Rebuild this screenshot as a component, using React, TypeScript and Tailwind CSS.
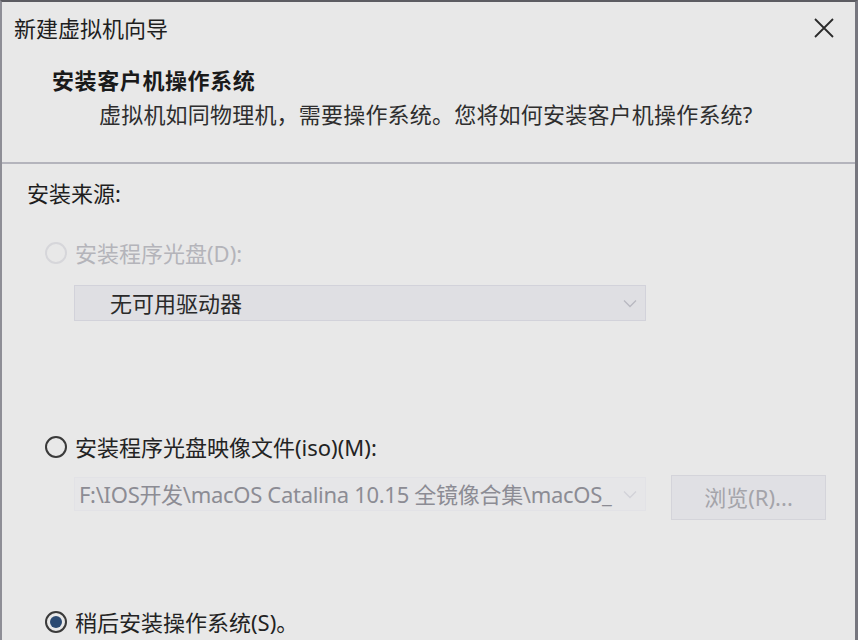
import React from 'react'

const font = { fontFamily: '"Noto Sans", "Noto Sans CJK SC", sans-serif' }

function Radio({ checked, disabled }: { checked?: boolean; disabled?: boolean }) {
  return (
    <span
      className={`flex h-[22px] w-[22px] shrink-0 items-center justify-center rounded-full border-2 ${
        disabled ? 'border-[#d6d6da]' : 'border-[#3a3a3a]'
      }`}
    >
      {checked && <span className="h-[12px] w-[12px] rounded-full bg-[#2b4a72]" />}
    </span>
  )
}

function Chevron({ faint }: { faint?: boolean }) {
  return (
    <svg width="14" height="9" viewBox="0 0 14 9" fill="none">
      <path d="M1 1.5 L7 7.5 L13 1.5" stroke={faint ? '#d2d2d8' : '#b8b8c0'} strokeWidth="1.3" />
    </svg>
  )
}

export default function App() {
  return (
    <div
      className="flex h-[640px] w-[858px] flex-col overflow-hidden border-t-2 border-l-2 border-r-[3px] border-t-[#5c5c62] border-l-[#8e8e96] border-r-[#76767e] bg-[#e8e8e8] text-[22px] text-[#1e1e1e]"
      style={font}
    >
      {/* header */}
      <div className="flex h-[162px] shrink-0 flex-col border-b-2 border-[#b4b4bc]">
        <div className="flex items-center justify-between pl-[12px] pr-[20px] pt-[10px]">
          <span className="leading-[32px]">新建虚拟机向导</span>
          <svg width="22" height="22" viewBox="0 0 22 22" fill="none">
            <path d="M2 2 L20 20 M20 2 L2 20" stroke="#2a2a2a" strokeWidth="1.8" />
          </svg>
        </div>
        <div className="mt-[21px] pl-[50px] font-bold leading-[30px] tracking-[0.6px] text-[#1a1a1a]">
          安装客户机操作系统
        </div>
        <div className="mt-[4px] pl-[97px] leading-[30px] tracking-[0.2px] text-[#2e2e2e]">
          虚拟机如同物理机，需要操作系统。您将如何安装客户机操作系统?
        </div>
      </div>

      {/* body */}
      <div className="flex flex-col pl-[25px] pt-[13px]">
        <div className="leading-[32px]">安装来源:</div>

        <div className="mt-[28px] flex items-center gap-[8px] pl-[18px] leading-[32px] text-[#b4b4ba]">
          <Radio disabled />
          <span>安装程序光盘(D):</span>
        </div>
        <div className="ml-[47px] mt-[16px] flex h-[36px] w-[572px] items-center justify-between border border-[#d2d2da] bg-[#dfdfe3] pl-[35px] pr-[8px] text-[#2a2a2a]">
          <span className="leading-[30px]">无可用驱动器</span>
          <Chevron />
        </div>

        <div className="mt-[110px] flex items-center gap-[8px] pl-[18px] leading-[32px] text-[#232323]">
          <Radio />
          <span>安装程序光盘映像文件(iso)(M):</span>
        </div>
        <div className="mt-[14px] flex h-[34px] items-start gap-[25px] pl-[47px]">
          <div className="flex h-[34px] w-[572px] items-center justify-between border border-[#e2e2e6] bg-[#e6e6e8] pl-[4px] pr-[8px] text-[#8c8c94]">
            <span className="whitespace-nowrap leading-[30px] tracking-[-0.3px]">F:\IOS开发\macOS Catalina 10.15 全镜像合集\macOS_</span>
            <Chevron faint />
          </div>
          <div className="-mt-[2px] flex h-[45px] w-[155px] shrink-0 items-center justify-center border border-[#d4d4da] bg-[#e0e0e4] text-[#a4a4aa]">
            浏览(R)...
          </div>
        </div>

        <div className="mt-[95px] flex items-center gap-[8px] pl-[18px] leading-[32px] text-[#232323]">
          <Radio checked />
          <span>稍后安装操作系统(S)。</span>
        </div>
      </div>
    </div>
  )
}
